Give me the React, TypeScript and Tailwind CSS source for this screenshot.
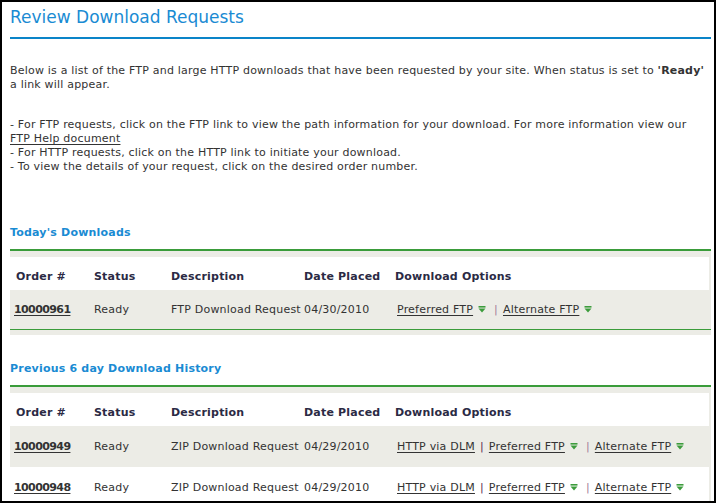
import React from "react";

type Row = {
  order: string;
  desc: string;
  date: string;
  http?: boolean;
};

const today: Row[] = [
  { order: "10000961", desc: "FTP Download Request", date: "04/30/2010" },
];

const history: Row[] = [
  { order: "10000949", desc: "ZIP Download Request", date: "04/29/2010", http: true },
  { order: "10000948", desc: "ZIP Download Request", date: "04/29/2010", http: true },
];

const cols = "grid grid-cols-[80px_77px_133px_91px_1fr]";

function DownArrow() {
  return (
    <svg width="8" height="7" viewBox="0 0 8 7" className="inline-block ml-[5px] align-[0px]">
      <rect x="0.5" y="0" width="7" height="1.6" fill="#3c9c3c" />
      <polygon points="0.5,2.6 7.5,2.6 4,6.4" fill="#3c9c3c" />
    </svg>
  );
}

function Options({ http }: { http?: boolean }) {
  return (
    <div className="pl-[2px] whitespace-nowrap">
      {http && (
        <>
          <a className="underline underline-offset-2 cursor-pointer">HTTP via DLM</a>
          <span className="text-[#5b1f4f] mx-[5px]">|</span>
        </>
      )}
      <a className="underline underline-offset-2 cursor-pointer">Preferred FTP</a>
      <DownArrow />
      <span className="text-[#a57a98] ml-[8px] mr-[5px]">|</span>
      <a className="underline underline-offset-2 cursor-pointer">Alternate FTP</a>
      <DownArrow />
    </div>
  );
}

function DownloadTable({ rows, rowH }: { rows: Row[]; rowH: string }) {
  return (
    <div className="border-t-2 border-[#3a9c3a] bg-[#ecece6] pt-[6px]">
      <div className={`${cols} bg-white mr-[2px] pt-[13px] pb-[6px] pl-[4px] leading-[14px] font-bold text-[#2b2a44]`}>
        <div className="pl-[2px]">Order #</div>
        <div>Status</div>
        <div>Description</div>
        <div>Date Placed</div>
        <div>Download Options</div>
      </div>
      {rows.map((r, i) => (
        <div
          key={r.order}
          className={`${cols} ${rowH} items-center pl-[4px] leading-[14px] ${
            i % 2 === 0 ? "bg-[#ecece6]" : "bg-white mr-[2px]"
          }`}
        >
          <div>
            <a className="font-bold tracking-[-0.6px] underline underline-offset-2 cursor-pointer">{r.order}</a>
          </div>
          <div>Ready</div>
          <div className="whitespace-nowrap">{r.desc}</div>
          <div>{r.date}</div>
          <Options http={r.http} />
        </div>
      ))}
    </div>
  );
}

export default function App() {
  return (
    <div className="w-[716px] h-[503px] border-2 border-black overflow-hidden bg-white font-['DejaVu_Sans',Verdana,sans-serif] text-[11px] tracking-[0.2px] text-[#333]">
      <div className="pl-[8px] pr-[3px]">
        <h1 className="text-[17px] tracking-normal leading-[22px] pt-[4px] pb-[9px] border-b-2 border-[#0a84c8] text-[#1a8bd3] font-normal">
          Review Download Requests
        </h1>

        <p className="mt-[25px] leading-[14px] whitespace-nowrap">
          Below is a list of the FTP and large HTTP downloads that have been requested by your site. When status is set to{" "}
          <b>'Ready'</b>
          <br />
          a link will appear.
        </p>

        <p className="mt-[26px] leading-[14px] whitespace-nowrap">
          - For FTP requests, click on the FTP link to view the path information for your download. For more information view our
          <br />
          <a className="underline underline-offset-2 cursor-pointer">FTP Help document</a>
          <br />
          - For HTTP requests, click on the HTTP link to initiate your download.
          <br />
          - To view the details of your request, click on the desired order number.
        </p>

        <h2 className="mt-[52px] mb-[9px] leading-[14px] font-bold text-[#1a8bd3]">Today's Downloads</h2>
        <DownloadTable rows={today} rowH="h-[39px]" />
        <div className="border-t border-[#3a9c3a] bg-[#ecece6] h-[6px]" />

        <h2 className="mt-[27px] mb-[9px] leading-[14px] font-bold text-[#1a8bd3]">Previous 6 day Download History</h2>
        <DownloadTable rows={history} rowH="h-[41px]" />
      </div>
    </div>
  );
}
